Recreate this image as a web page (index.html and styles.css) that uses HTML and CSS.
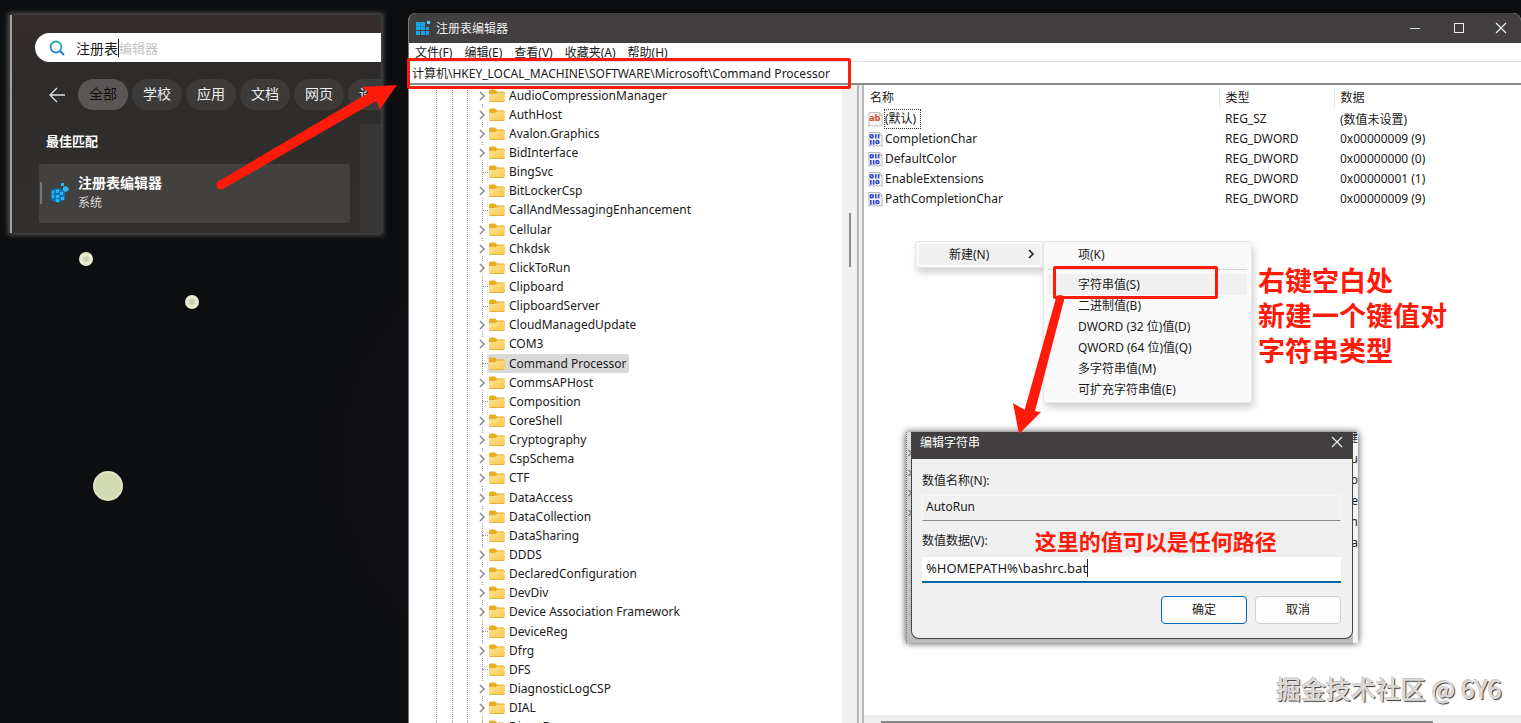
FILE: index.html
```html
<!DOCTYPE html>
<html lang="zh-CN">

<head>
    <meta charset="UTF-8">
    <title>注册表编辑器</title>
    <link rel="stylesheet" href="styles.css">
</head>

<body>
    <!-- 公用图标 -->
    <svg class="defs" width="0" height="0" aria-hidden="true">
        <linearGradient id="folder-fill" x1="0" y1="0" x2="1" y2="1">
            <stop offset="0" stop-color="#ffe394" />
            <stop offset="1" stop-color="#fbc84c" />
        </linearGradient>
        <linearGradient id="lens" x1="0" y1="1" x2="1" y2="0">
            <stop offset="0" stop-color="#1a7fd6" />
            <stop offset="1" stop-color="#2fb7a5" />
        </linearGradient>
        <symbol id="folder" viewBox="0 0 16 14">
            <path d="M0 2q0-1.500 1.500-1.500h4.500l2 2h6.500q1 0 1 1v2h-15.500z" fill="#e9ae1e" />
            <path d="M0 5.500h6l2-2h7q.8 0 .8.800v7.200q0 1-1 1h-13.800q-1 0-1-1z" fill="url(#folder-fill)" />
            <path d="M.5 12.500h14.800" stroke="#e8b33c" />
        </symbol>
        <symbol id="chevron" viewBox="0 0 8 10">
            <path d="M2 1l4 4-4 4" fill="none" stroke="currentColor" stroke-width="1.500" />
        </symbol>
        <symbol id="close" viewBox="0 0 12 12">
            <path d="M1 1l10 10M11 1L1 11" stroke="#eee" stroke-width="1.200" />
        </symbol>
        <symbol id="page" viewBox="0 0 16 16">
            <path d="M1 .500h11l3 3v12l-2-1.500-2 1.500-2.500-1.500-2.500 1.500-2.500-1.500-2.500 1.500z" fill="#f7f7f7" stroke="#b5b5b5" />
            <path d="M12 .500v3h3" fill="none" stroke="#b5b5b5" />
        </symbol>
        <symbol id="binary" viewBox="0 0 16 16">
            <use href="#page" />
            <g fill="none" stroke="#2a48d8" stroke-width="1.700">
                <rect x="2.500" y="3" width="3" height="3" rx="1" />
                <path d="M8.300 2v5M11.300 2v5M3 8.500v5M6 8.500v5" />
                <rect x="8.500" y="9.300" width="3" height="3" rx="1" />
            </g>
        </symbol>
    </svg>

    <main class="desktop">
        <i class="lamp lamp-a"></i>
        <i class="lamp lamp-b"></i>
        <i class="lamp lamp-c"></i>

        <!-- 开始菜单搜索 -->
        <section class="search">
            <form class="search-box">
                <svg width="16" height="16" viewBox="0 0 16 16">
                    <circle cx="7" cy="7" r="5.500" fill="none" stroke="url(#lens)" stroke-width="1.800" />
                    <path d="M11 11l4 4" stroke="#1a7fd6" stroke-width="2" />
                </svg>
                <input type="text" value="注册表" aria-label="搜索">
                <span class="suggest">编辑器</span>
            </form>
            <nav class="chips">
                <button class="back" aria-label="返回">
                    <svg width="16" height="16" viewBox="0 0 16 16">
                        <path d="M16 8H1M8 1L1 8l7 7" fill="none" stroke="#ddd" stroke-width="1.300" />
                    </svg>
                </button>
                <button class="chip active">全部</button>
                <button class="chip">学校</button>
                <button class="chip">应用</button>
                <button class="chip">文档</button>
                <button class="chip">网页</button>
                <button class="chip">设置</button>
            </nav>
            <div class="results">
                <div class="best">
                    <h2>最佳匹配</h2>
                    <a class="result" href="#">
                        <svg width="20" height="22" viewBox="0 0 20 22">
                            <path d="M1 8l8-2 6 3v8l-7 4-7-3z" fill="#0a78b8" />
                            <path d="M2 9l2-.500v3l-2 .500zM6 8l3-.500v3L6 11zM2 13h2v3H2zM6 13h3v3H6zM10 10h3v3h-3zM11 15h3v3h-3zM6 17h3v3H6zM13 5l3-1 3 2-1 3-3 1-2-2zM11 1h3v3h-3z" fill="#2cb8f2" />
                        </svg>
                        <span>
                            <strong>注册表编辑器</strong>
                            <small>系统</small>
                        </span>
                    </a>
                </div>
                <div class="preview"></div>
            </div>
        </section>

        <!-- 注册表编辑器窗口 -->
        <section class="regedit">
            <header class="titlebar">
                <svg width="14" height="14" viewBox="0 0 14 14">
                    <path d="M0 1h9v8H0zM10 6h3v3h-3zM0 10h4v4H0zM5 10h4v4H5zM10 10h3v4h-3z" fill="#18a5e6" />
                    <path d="M4.500 1v8M0 5.500h9" stroke="#1583b8" stroke-width=".7" />
                    <path d="M11 0h3v3h-3z" fill="#5bd0fa" />
                </svg>
                <h1>注册表编辑器</h1>
                <button aria-label="最小化"><svg width="12" height="12"><path d="M1 6.500h10" stroke="#ddd" /></svg></button>
                <button aria-label="最大化"><svg width="12" height="12"><rect x="1.500" y="1.500" width="9" height="9" fill="none" stroke="#eee" /></svg></button>
                <button aria-label="关闭"><svg width="12" height="12"><use href="#close" /></svg></button>
            </header>
            <nav class="menubar">
                <a href="#">文件(F)</a>
                <a href="#">编辑(E)</a>
                <a href="#">查看(V)</a>
                <a href="#">收藏夹(A)</a>
                <a href="#">帮助(H)</a>
            </nav>
            <input class="address" type="text" aria-label="地址" value="计算机\HKEY_LOCAL_MACHINE\SOFTWARE\Microsoft\Command Processor">
            <div class="panes">
                <ul class="tree" id="tree"></ul>
                <div class="scrollbar"><i></i></div>
                <div class="splitter"></div>
                <div class="values">
                    <table>
                        <thead>
                            <tr><th class="col-name">名称</th><th class="col-type">类型</th><th>数据</th></tr>
                        </thead>
                        <tbody>
                            <tr>
                                <td><div class="name"><svg width="15" height="15" viewBox="0 0 16 16"><use href="#page" /><text class="ab" x="1" y="10">ab</text></svg><span class="focus">(默认)</span></div></td>
                                <td>REG_SZ</td><td>(数值未设置)</td>
                            </tr>
                            <tr>
                                <td><div class="name"><svg width="15" height="15"><use href="#binary" /></svg><span>CompletionChar</span></div></td>
                                <td>REG_DWORD</td><td>0x00000009 (9)</td>
                            </tr>
                            <tr>
                                <td><div class="name"><svg width="15" height="15"><use href="#binary" /></svg><span>DefaultColor</span></div></td>
                                <td>REG_DWORD</td><td>0x00000000 (0)</td>
                            </tr>
                            <tr>
                                <td><div class="name"><svg width="15" height="15"><use href="#binary" /></svg><span>EnableExtensions</span></div></td>
                                <td>REG_DWORD</td><td>0x00000001 (1)</td>
                            </tr>
                            <tr>
                                <td><div class="name"><svg width="15" height="15"><use href="#binary" /></svg><span>PathCompletionChar</span></div></td>
                                <td>REG_DWORD</td><td>0x00000009 (9)</td>
                            </tr>
                        </tbody>
                    </table>
                    <div class="hscroll"><i></i></div>
                </div>
            </div>
        </section>

        <!-- 右键菜单 -->
        <div class="menu menu-root">
            <button>新建(N)<svg width="8" height="10"><use href="#chevron" /></svg></button>
        </div>
        <div class="menu menu-sub">
            <button>项(K)</button>
            <hr>
            <button class="hover">字符串值(S)</button>
            <button>二进制值(B)</button>
            <button>DWORD (32 位)值(D)</button>
            <button>QWORD (64 位)值(Q)</button>
            <button>多字符串值(M)</button>
            <button>可扩充字符串值(E)</button>
        </div>

        <!-- 编辑字符串对话框 -->
        <section class="shot">
            <div class="edge edge-left">
                <svg width="6" height="10"><use href="#chevron" /></svg>
                <svg width="6" height="10"><use href="#chevron" /></svg>
                <svg width="6" height="10"><use href="#chevron" /></svg>
                <svg width="6" height="10"><use href="#chevron" /></svg>
            </div>
            <form class="dialog">
                <header>
                    <h2>编辑字符串</h2>
                    <button type="button" aria-label="关闭"><svg width="12" height="12"><use href="#close" /></svg></button>
                </header>
                <div class="fields">
                    <label for="value-name">数值名称(N):</label>
                    <input id="value-name" type="text" value="AutoRun" readonly>
                    <div class="label-row">
                        <label for="value-data">数值数据(V):</label>
                        <strong class="note">这里的值可以是任何路径</strong>
                    </div>
                    <div class="data-box">
                        <input id="value-data" type="text" value="%HOMEPATH%\bashrc.bat">
                    </div>
                    <div class="actions">
                        <button type="button" class="ok">确定</button>
                        <button type="button">取消</button>
                    </div>
                </div>
            </form>
            <div class="edge edge-right">
                <span>键</span><span>Au</span><span>Co</span><span>De</span><span>En</span><span>Pa</span>
            </div>
        </section>

        <!-- 标注 -->
        <div class="frame frame-path"></div>
        <div class="frame frame-string"></div>
        <p class="callout">右键空白处<br>新建一个键值对<br>字符串类型</p>
        <svg class="arrow arrow-path" width="184" height="112" viewBox="0 0 184 112" fill="#ff1a0a">
            <circle cx="7" cy="105" r="4.500" />
            <path d="M5 101L156 12l6 9L9 109z" />
            <path d="M183 5L148 7l12 10 6 12z" />
        </svg>
        <svg class="arrow arrow-string" width="56" height="142" viewBox="0 0 56 142" fill="#ff1a0a">
            <circle cx="50" cy="5" r="4" />
            <path d="M46 4L14 118l10 3L54 6z" />
            <path d="M9 140L3 109l12 7 16 2z" />
        </svg>
        <div class="watermark">掘金技术社区 @ 6Y6</div>
    </main>

    <script>
        // 前缀 + 表示该项可以展开
        const keys = [
            '+AudioCompressionManager', '+AuthHost', '+Avalon.Graphics', '+BidInterface', 'BingSvc',
            '+BitLockerCsp', 'CallAndMessagingEnhancement', '+Cellular', '+Chkdsk', '+ClickToRun',
            'Clipboard', 'ClipboardServer', '+CloudManagedUpdate', '+COM3', 'Command Processor',
            '+CommsAPHost', 'Composition', '+CoreShell', '+Cryptography', '+CspSchema', '+CTF',
            '+DataAccess', '+DataCollection', 'DataSharing', '+DDDS', '+DeclaredConfiguration',
            '+DevDiv', '+Device Association Framework', 'DeviceReg', '+Dfrg', 'DFS',
            '+DiagnosticLogCSP', '+DIAL', 'DirectDraw'
        ];
        const tree = document.getElementById('tree');

        keys.forEach(key => {
            const open = key.startsWith('+');
            const name = open ? key.slice(1) : key;
            const item = document.createElement('li');
            if (name === 'Command Processor') {
                item.classList.add('selected');
            }
            item.innerHTML = `
                ${open ? '<svg class="expand" width="8" height="10"><use href="#chevron" /></svg>' : '<i class="stub"></i>'}
                <span class="key"><svg width="16" height="14"><use href="#folder" /></svg>${name}</span>
            `;
            tree.appendChild(item);
        });
    </script>
</body>

</html>
```

FILE: styles.css
```css
* {
    box-sizing: border-box;
}

body {
    margin: 0;
    font-family: "Noto Sans", "Noto Sans CJK SC", sans-serif;
    font-size: 12px;
    color: #1a1a1a;
}

button,
input {
    font: inherit;
    color: inherit;
    border: none;
    background: none;
    padding: 0;
    outline: none;
}

a {
    color: inherit;
    text-decoration: none;
}

h1,
h2,
p {
    margin: 0;
    font-size: 12px;
    font-weight: normal;
}

svg {
    flex: none;
}

.defs {
    position: absolute;
}

.desktop {
    position: relative;
    height: 100vh;
    overflow: hidden;
    background: radial-gradient(circle at 560px 460px, #101014 0 210px, #0d0e10 235px);
}

.lamp {
    position: absolute;
    width: 14px;
    height: 14px;
    border-radius: 50%;
    background: radial-gradient(#c9cfae 15%, #e6ebd2 45%);
}

.lamp-a {
    left: 79px;
    top: 252px;
}

.lamp-b {
    left: 185px;
    top: 295px;
}

.lamp-c {
    left: 93px;
    top: 471px;
    width: 30px;
    height: 30px;
    background: #d3dbb2;
    border: 2px solid #dfe5c6;
}

/* 搜索面板 */
.search {
    position: absolute;
    left: 10px;
    top: 15px;
    width: 371px;
    height: 218px;
    padding: 18px 0 0 23px;
    border-left: 2px solid #a5a5a5;
    background: linear-gradient(#352d2b, #2d2c2b 30%, #32302e);
    box-shadow: 0 0 5px 2px #555;
    overflow: hidden;
}

.search-box {
    display: flex;
    align-items: center;
    height: 29px;
    padding-left: 14px;
    border-radius: 15px 0 0 15px;
    background: #fff;
    font-size: 14px;
}

.search-box input {
    width: 43px;
    height: 18px;
    margin-left: 11px;
    border-right: 1px solid #222;
}

.suggest {
    font-size: 13px;
    color: #c4c4c4;
}

.chips {
    display: flex;
    gap: 4px;
    margin-top: 17px;
    padding-left: 14px;
}

.back {
    flex: none;
    width: 25px;
    display: flex;
    align-items: center;
}

.chip {
    flex: none;
    width: 50px;
    height: 31px;
    padding-bottom: 3px;
    border-radius: 16px;
    background: #3d3b3a;
    color: #eee;
    font-size: 14px;
}

.chip.active {
    background: #5a5655;
    color: #111;
}

.results {
    display: flex;
    gap: 10px;
    margin-top: 14px;
}

.best {
    width: 311px;
    margin-left: 4px;
    color: #fff;
}

.best h2 {
    padding: 7px;
    font-size: 13px;
    line-height: 20px;
    font-weight: bold;
}

.result {
    display: flex;
    align-items: center;
    gap: 8px;
    height: 59px;
    margin-top: 6px;
    padding: 0 0 2px 11px;
    border-radius: 3px;
    background: linear-gradient(#777, #777) 1px 18px / 2px 22px no-repeat, #434140;
}

.result strong,
.result small {
    display: block;
    font-size: 14px;
    line-height: 20px;
}

.result small {
    font-size: 12px;
    color: #ddd;
}

.preview {
    flex: 1;
    height: 110px;
    background: #393736;
}

/* 主窗口 */
.regedit {
    position: absolute;
    left: 408px;
    right: 0;
    top: 13px;
    bottom: 0;
    display: flex;
    flex-direction: column;
    border-left: 1px solid #777;
    border-radius: 8px 8px 0 0;
    background: #fff;
    overflow: hidden;
}

.titlebar {
    display: flex;
    align-items: center;
    height: 30px;
    padding-left: 7px;
    background: #413f40;
    color: #eee;
}

.titlebar h1 {
    flex: 1;
    margin-left: 6px;
}

.titlebar button {
    display: flex;
    align-items: center;
    justify-content: center;
    width: 44px;
    height: 30px;
}

.titlebar button:last-child {
    width: 40px;
}

.menubar {
    display: flex;
    gap: 12px;
    height: 19px;
    padding-left: 6px;
    border-bottom: 1px solid #e3e3e3;
    line-height: 19px;
}

.address {
    height: 23px;
    padding-left: 3px;
    border-bottom: 2px solid #8a8a8a;
}

.panes {
    flex: 1;
    display: flex;
    min-height: 0;
}

.tree {
    --dots: repeating-linear-gradient(#999 0 1px, transparent 1px 2px);
    flex: none;
    display: flex;
    flex-direction: column;
    width: 433px;
    margin: 1px 0 -14px;
    padding: 0 0 0 69px;
    list-style: none;
    background-image: var(--dots), var(--dots), var(--dots), var(--dots);
    background-position: 27px 0, 43px 0, 58px 0, 73px 0;
    background-size: 1px 100%;
    background-repeat: no-repeat;
}

.tree li {
    flex: 1;
    display: flex;
    align-items: center;
    min-height: 0;
}

.expand {
    height: 14px;
    padding: 2px 0;
    background: #fff;
    color: #8a8a8a;
}

.stub {
    width: 6px;
    margin-left: 4px;
    border-top: 1px dotted #999;
}

.expand + .key {
    margin-left: 2px;
}

.key {
    display: flex;
    align-items: center;
    gap: 4px;
    height: 19px;
    padding: 0 3px 0 1px;
    line-height: 18px;
    white-space: nowrap;
}

.selected .key {
    background: #d9d9d9;
    border-radius: 2px;
}

.scrollbar {
    width: 15px;
    padding: 128px 0 0 7px;
    background: #f0f0f0;
}

.scrollbar i {
    display: block;
    width: 2px;
    height: 54px;
    background: #8a8a8a;
}

.splitter {
    width: 7px;
    border: solid #b5b9ba;
    border-width: 0 2px;
    background: #f0f0f0;
}

.values {
    flex: 1;
    display: flex;
    flex-direction: column;
    justify-content: space-between;
    padding-top: 2px;
}

.values table {
    width: 100%;
    table-layout: fixed;
    border-collapse: collapse;
}

.values th {
    height: 21px;
    padding: 0 6px 1px;
    border-right: 1px solid #e2e2e2;
    font-weight: normal;
    text-align: left;
}

.values th:last-child {
    border: none;
}

.col-name {
    width: 355px;
}

.col-type {
    width: 115px;
}

.values td {
    height: 20px;
    padding: 1px 6px 0;
}

.values td:first-child {
    padding: 2px 4px 0;
}

.name {
    display: flex;
    align-items: center;
    gap: 2px;
    line-height: 18px;
}

.focus {
    padding-right: 4px;
    outline: 1px dotted #333;
}

.ab {
    font-size: 10px;
    font-weight: bold;
    fill: #d9482b;
}

.hscroll {
    height: 8px;
    padding: 6px 88px 0 17px;
    background: #f0f0f0;
}

.hscroll i {
    display: block;
    height: 2px;
    background: #8a8a8a;
}

/* 右键菜单 */
.menu {
    position: absolute;
    display: flex;
    flex-direction: column;
    border: 1px solid #e6e6e6;
    border-radius: 3px;
    background: #f9f9f9;
    box-shadow: 2px 5px 7px rgba(0, 0, 0, .18);
}

.menu button {
    height: 21px;
    padding: 0 0 2px 30px;
    text-align: left;
}

.menu-root {
    left: 915px;
    top: 241px;
    width: 129px;
    padding: 2px 3px;
}

.menu-root button {
    display: flex;
    align-items: center;
    justify-content: space-between;
    padding-right: 5px;
    background: #f0f0f0;
}

.menu-sub {
    left: 1043px;
    top: 241px;
    width: 209px;
    padding: 2px 4px;
}

.menu-sub hr {
    width: 100%;
    margin: 4px 0;
    border: none;
    border-top: 1px solid #d5d5d5;
}

.menu-sub .hover {
    background: #f0f0f0;
}

/* 对话框 */
.shot {
    position: absolute;
    left: 906px;
    top: 432px;
    width: 452px;
    height: 211px;
    display: flex;
    background: linear-gradient(#ddd, #bbb);
    box-shadow: 0 0 7px #444;
    overflow: hidden;
}

.edge {
    flex: none;
    width: 5px;
    overflow: hidden;
}

.edge-left {
    display: flex;
    flex-direction: column;
    gap: 10px;
    padding-top: 16px;
    border-left: 1px dotted #777;
    color: #777;
}

.edge-right {
    display: flex;
    flex-direction: column;
    align-items: flex-end;
    padding-top: 16px;
    background: #f4f4f4;
}

.edge-right span {
    height: 21px;
    line-height: 21px;
}

.edge-right span:first-child {
    margin-top: -21px;
}

.dialog {
    flex: 1;
    display: flex;
    flex-direction: column;
    margin-bottom: 4px;
    border: 1px solid #444;
    border-top: none;
    border-radius: 0 0 8px 8px;
    background: #f0f0f0;
    overflow: hidden;
}

.dialog header {
    display: flex;
    justify-content: space-between;
    height: 27px;
    padding: 0 9px 4px 8px;
    background: #413f40;
    color: #fff;
}

.dialog h2 {
    line-height: 22px;
}

.fields {
    display: flex;
    flex-direction: column;
    padding: 12px 11px 0 10px;
}

.fields label {
    line-height: 20px;
}

.fields input {
    height: 26px;
    padding-left: 4px;
}

#value-name {
    margin-top: 4px;
    padding: 0 0 3px 3px;
    border: 1px solid #f7f7f7;
    border-bottom-color: #888;
}

.label-row {
    display: flex;
    align-items: center;
    gap: 47px;
    height: 28px;
    margin: 6px 0 2px;
}

.note {
    font-size: 22px;
    line-height: 28px;
    color: #ff1a0a;
}

.data-box {
    display: flex;
    height: 26px;
    border-bottom: 2px solid #0067a8;
    background: #fff;
}

#value-data {
    width: 166px;
    height: 18px;
    margin: 2px 0;
    border-right: 1px solid #222;
    font-size: 13px;
}

.actions {
    display: flex;
    justify-content: flex-end;
    gap: 8px;
    margin-top: 13px;
}

.actions button {
    width: 86px;
    height: 28px;
    padding-bottom: 2px;
    border: 1px solid #d0d0d0;
    border-radius: 4px;
    background: #fdfdfd;
}

.actions .ok {
    border-color: #0067c0;
}

/* 标注 */
.frame {
    position: absolute;
    border: 3px solid #ff1a0a;
    border-radius: 2px;
}

.frame-path {
    left: 407px;
    top: 58px;
    width: 444px;
    height: 31px;
}

.frame-string {
    left: 1053px;
    top: 266px;
    width: 165px;
    height: 33px;
}

.callout {
    position: absolute;
    left: 1258px;
    top: 263px;
    font-size: 27px;
    font-weight: bold;
    line-height: 35px;
    color: #ff1a0a;
}

.arrow {
    position: absolute;
}

.arrow-path {
    left: 214px;
    top: 80px;
}

.arrow-string {
    left: 1010px;
    top: 294px;
}

.watermark {
    position: absolute;
    right: 19px;
    bottom: 17px;
    font-family: "Noto Sans CJK SC", sans-serif;
    font-size: 25px;
    line-height: 36px;
    color: #dcdcdc;
    text-shadow: -1px -1px 0 #c8c8c8, 1px 1px 1px #333;
}
```
